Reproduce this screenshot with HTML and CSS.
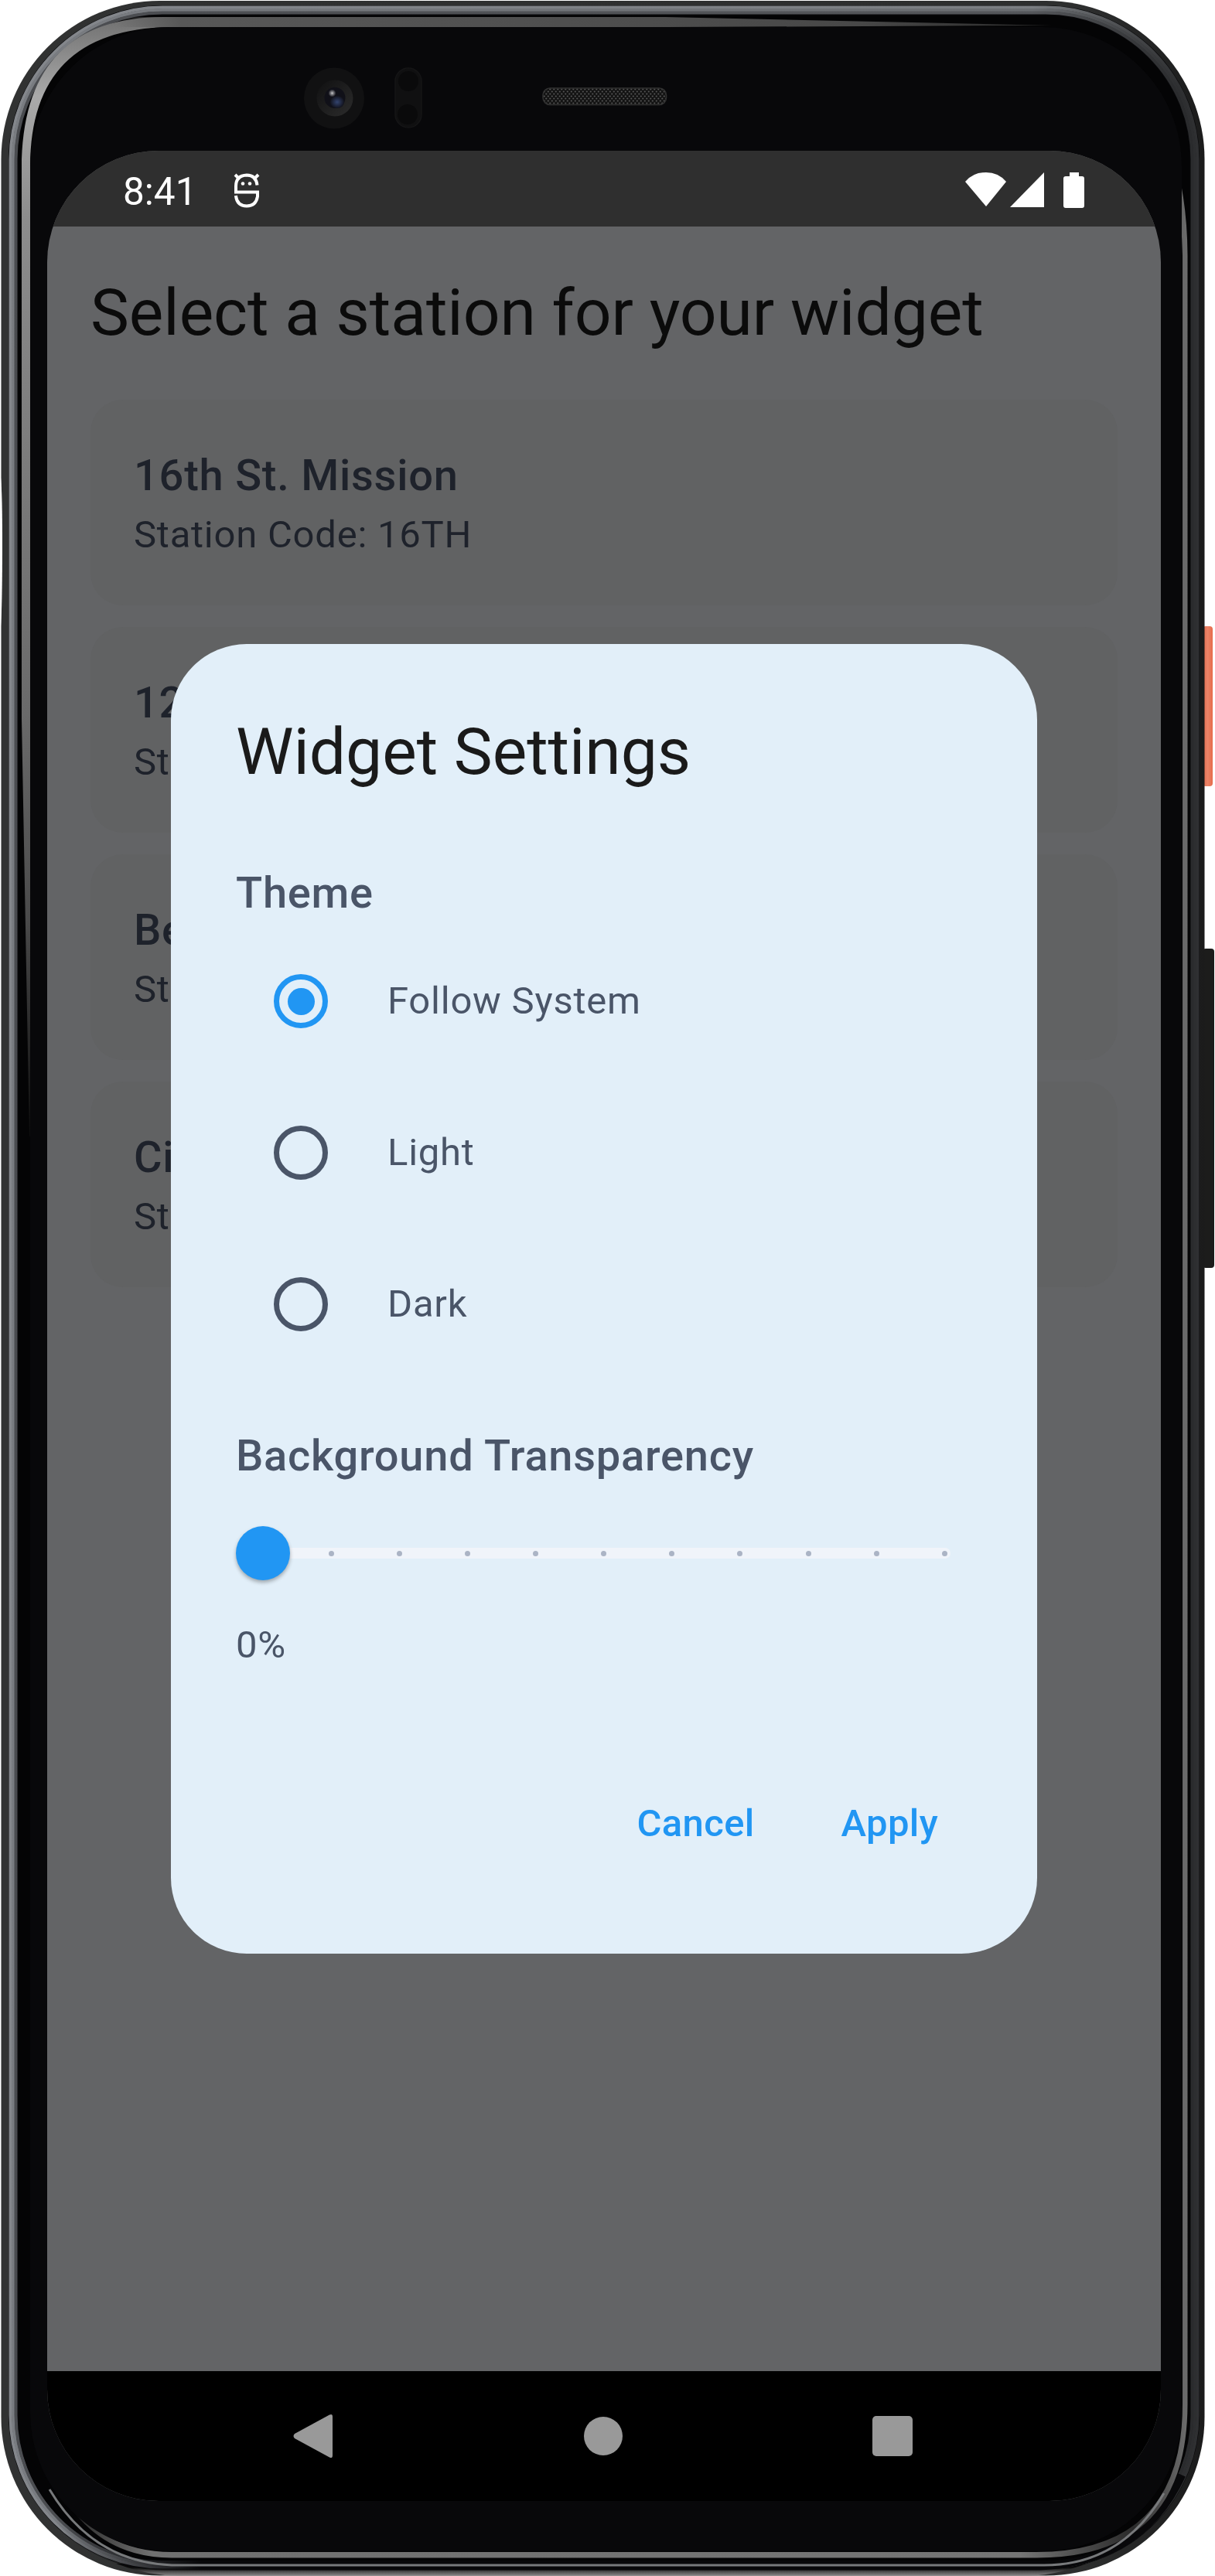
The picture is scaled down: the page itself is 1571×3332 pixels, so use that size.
FILE: index.html
```html
<!DOCTYPE html>
<html lang="en">
<head>
<meta charset="utf-8">
<title>Widget Settings</title>
<link rel="stylesheet" href="styles.css">
</head>
<body>
<div class="device">
  <svg class="frame" viewBox="0 0 1571 3332" aria-hidden="true">
    <defs>
      <linearGradient id="rimA" x1="0" x2="1571" y1="0" y2="0" gradientUnits="userSpaceOnUse">
        <stop offset="0" stop-color="#84878c"/><stop offset=".85" stop-color="#7b7e82"/><stop offset=".97" stop-color="#2f3032"/>
      </linearGradient>
      <linearGradient id="rimB" x1="0" x2="1571" y1="0" y2="0" gradientUnits="userSpaceOnUse">
        <stop offset="0" stop-color="#797c81"/><stop offset=".85" stop-color="#6b6e72"/><stop offset=".97" stop-color="#2d2e30"/>
      </linearGradient>
      <linearGradient id="rimC" x1="0" x2="1571" y1="0" y2="0" gradientUnits="userSpaceOnUse">
        <stop offset="0" stop-color="#4a4c50"/><stop offset=".85" stop-color="#55575b"/><stop offset=".97" stop-color="#2a2b2d"/>
      </linearGradient>
      <linearGradient id="edge" x1="0" x2="1" y1="0" y2="0">
        <stop offset="0" stop-color="#313232"/><stop offset=".9" stop-color="#2d2e2e"/><stop offset="1" stop-color="#1b1b1b"/>
      </linearGradient>
      <linearGradient id="bevelLeft" x1="0" x2="0" y1="22" y2="1480" gradientUnits="userSpaceOnUse">
        <stop offset="0" stop-color="#707070"/><stop offset=".07" stop-color="#a9a9a9"/><stop offset=".18" stop-color="#8c8c8c"/>
        <stop offset=".62" stop-color="#6a6a6a"/><stop offset=".8" stop-color="#4a4a4a"/><stop offset="1" stop-color="#0a0a0a"/>
      </linearGradient>
      <linearGradient id="bevelTop" x1="150" x2="1350" y1="0" y2="0" gradientUnits="userSpaceOnUse">
        <stop offset="0" stop-color="#5a5a5a" stop-opacity="0"/><stop offset=".07" stop-color="#585858"/><stop offset=".8" stop-color="#484848"/><stop offset="1" stop-color="#2a2a2a"/>
      </linearGradient>
      <linearGradient id="bottomDark" x1="70" x2="260" y1="0" y2="0" gradientUnits="userSpaceOnUse">
        <stop offset="0" stop-color="#08080a" stop-opacity="0"/><stop offset="1" stop-color="#08080a"/>
      </linearGradient>
      <linearGradient id="bottomEdge" x1="0" x2="0" y1="3321" y2="3332" gradientUnits="userSpaceOnUse">
        <stop offset="0" stop-color="#0a0a0a"/><stop offset=".6" stop-color="#5b5b5b"/><stop offset="1" stop-color="#8d8a8b"/>
      </linearGradient>
      <linearGradient id="bottomBevel" x1="80" x2="1538" y1="0" y2="0" gradientUnits="userSpaceOnUse">
        <stop offset="0" stop-color="#222"/><stop offset=".08" stop-color="#707070"/><stop offset=".85" stop-color="#757575"/><stop offset=".95" stop-color="#2a2a2a"/><stop offset="1" stop-color="#6f6f6f"/>
      </linearGradient>
      <linearGradient id="power" x1="0" x2="1" y1="0" y2="0">
        <stop offset="0" stop-color="#e06a4c"/><stop offset=".5" stop-color="#ec8468"/><stop offset="1" stop-color="#e66b4a"/>
      </linearGradient>
      <linearGradient id="lens" x1="0" x2="1" y1="0" y2="1">
        <stop offset="0" stop-color="#101011"/><stop offset="1" stop-color="#2c2c2c"/>
      </linearGradient>
      <radialGradient id="blue"><stop offset="0" stop-color="#33446f"/><stop offset="1" stop-color="#12131d"/></radialGradient>
      <radialGradient id="glint"><stop offset="0" stop-color="#c5c5c8"/><stop offset=".4" stop-color="#77777c"/><stop offset="1" stop-color="#77777c" stop-opacity="0"/></radialGradient>
      <pattern id="mesh" width="5" height="6" patternUnits="userSpaceOnUse">
        <rect width="5" height="6" fill="#131313"/><circle cx="1.3" cy="1.5" r="1.100" fill="#555"/><circle cx="3.8" cy="4.5" r="1.100" fill="#555"/>
      </pattern>
    </defs>
    <rect x="1555" y="810" width="13" height="207" rx="4" fill="url(#power)"/>
    <rect x="1555" y="1227" width="15" height="413" rx="4" fill="#1c1c1b"/>
    <rect x="1.5" y="1" width="1556" height="3330.500" rx="205" fill="url(#edge)"/>
    <path d="M0 610Q3 625 3 700Q3 800 0 820Z" fill="#fff"/>
    <path d="M150 3316Q190 3331.500 230 3331.500H1330Q1370 3331.500 1420 3310Z" fill="url(#bottomEdge)"/>
    <rect x="11" y="7" width="1540" height="3316" rx="199" fill="#08080a"/>
    <rect x="13.500" y="9.500" width="1535" height="3311" rx="196.500" fill="none" stroke="url(#rimA)" stroke-width="4"/>
    <rect x="17" y="13" width="1528" height="3304" rx="193" fill="none" stroke="url(#rimB)" stroke-width="4"/>
    <rect x="20.500" y="16.500" width="1521" height="3297" rx="189.500" fill="none" stroke="url(#rimC)" stroke-width="4"/>
    <path d="M70 3246Q120 3316 215 3316H1345Q1475 3310 1525 3200" fill="none" stroke="url(#bottomDark)" stroke-width="17"/>
    <rect x="23.500" y="20" width="1515" height="3292" rx="186" fill="#040405"/>
    <path d="M38 1470L28 930V206Q34 22 212 22H240V35H219Q39 38 39 215V1470Z" fill="url(#bevelLeft)"/>
    <path d="M150 22H860L1360 33L860 35H150Z" fill="url(#bevelTop)"/>
    <path d="M1535.500 330V3110Q1535 3308.500 1340 3308.500H222Q125 3308 78 3222Q130 3301 222 3301H1340Q1529 3300 1529 3110V330Q1526 225 1505 165Q1535 235 1535.500 330Z" fill="url(#bottomBevel)"/>
    <path d="M1505 3225Q1450 3318 1350 3318H222Q120 3314 64 3220" fill="none" stroke="#77797b" stroke-width="3"/>
    <rect x="39" y="35" width="1489" height="3265" rx="180" fill="#08080a"/>
    <ellipse cx="432" cy="127" rx="39" ry="39.500" fill="#111112"/>
    <circle cx="433" cy="127" r="23.500" fill="url(#lens)"/>
    <circle cx="433" cy="126.500" r="13.500" fill="#101018"/>
    <ellipse cx="436" cy="132" rx="9" ry="8" fill="url(#blue)"/>
    <circle cx="429.500" cy="120.500" r="5" fill="url(#glint)"/>
    <rect x="511" y="88" width="34" height="77" rx="17" fill="#101011" stroke="#151516" stroke-width="1.500"/>
    <circle cx="528" cy="105" r="13" fill="#0a0a0b"/><circle cx="527" cy="148" r="13" fill="#0a0a0b"/>
    <rect x="702" y="114" width="159.500" height="21.500" rx="9" fill="url(#mesh)" stroke="#303030" stroke-width="1.500"/>
  </svg>

  <div class="screen">
    <header class="status">
      <span class="clock">8:41</span>
      <svg class="bug" viewBox="0 0 34 47" fill="none" stroke="#fff" stroke-width="4">
        <path d="M30.500 16.500Q29 3.500 17 3.500Q3 4 3 18V25.500H31V31Q29 43.500 17 43.500Q4 43 3 30"/>
        <path d="M2 3L8 9M32 3L26 9" stroke-width="4"/>
        <circle cx="12" cy="14.500" r="2.300" fill="#fff" stroke="none"/><circle cx="21" cy="14.500" r="2.300" fill="#fff" stroke="none"/>
      </svg>
      <svg class="signals" viewBox="0 0 156 46" fill="#fff">
        <path d="M0 12Q10 0 27 0Q43 0 53 12L27 44Z"/>
        <path d="M58 45L102 0V45Z"/>
        <path d="M135 0H147V5H151Q154 5 154 8V43Q154 46 151 46H130Q127 46 127 43V8Q127 5 130 5H135Z"/>
      </svg>
    </header>

    <main class="page">
      <h1 class="headline">Select a station for your widget</h1>
      <ul class="stations">
        <li class="station"><h2 class="title">16th St. Mission</h2><p class="body">Station Code: 16TH</p></li>
        <li class="station"><h2 class="title">12</h2><p class="body">St</p></li>
        <li class="station"><h2 class="title">Be</h2><p class="body">St</p></li>
        <li class="station"><h2 class="title">Ci</h2><p class="body">St</p></li>
      </ul>
    </main>

    <nav class="navbar">
      <svg viewBox="0 0 52 58"><path d="M47 1.500Q51 -.5 51 4V54Q51 58.500 47 56.500L2 32Q-1 29 2 26Z"/></svg>
      <svg viewBox="0 0 52 58"><circle cx="26" cy="29" r="25"/></svg>
      <svg viewBox="0 0 52 58"><rect y="3" width="52" height="52" rx="5"/></svg>
    </nav>

    <div class="overlay">
      <section class="dialog">
        <h2 class="headline">Widget Settings</h2>
        <h3 class="title theme">Theme</h3>
        <div class="options">
          <div class="option"><span class="radio checked"></span><span class="body">Follow System</span></div>
          <div class="option"><span class="radio"></span><span class="body">Light</span></div>
          <div class="option"><span class="radio"></span><span class="body">Dark</span></div>
        </div>
        <h3 class="title transparency">Background Transparency</h3>
        <div class="slider">
          <div class="thumb"></div>
          <div class="track"><i></i><i></i><i></i><i></i><i></i><i></i><i></i><i></i><i></i><i></i></div>
        </div>
        <p class="body">0%</p>
        <div class="actions"><span class="button">Cancel</span><span class="button">Apply</span></div>
      </section>
    </div>
  </div>
</div>
</body>
</html>
```
FILE: styles.css
```css
* { box-sizing: border-box; margin: 0; padding: 0; }
body { background: #fff; font-family: Roboto, "Liberation Sans", sans-serif; }
.device { position: relative; width: 1571px; height: 3332px; padding: 195px 70px 97px 61px; overflow: hidden; }
.frame { position: absolute; inset: 0; width: 1571px; height: 3332px; }
.screen { position: relative; display: flex; flex-direction: column; width: 1440px; height: 3040px; border-radius: 144px; overflow: hidden; background: #636466; }

.headline { font-size: 84px; line-height: 112px; font-weight: 400; letter-spacing: -.07px; white-space: nowrap; }
.title { font-size: 56px; line-height: 84px; font-weight: 500; letter-spacing: .76px; white-space: nowrap; }
.body { font-size: 49px; line-height: 70px; font-weight: 400; letter-spacing: .76px; white-space: nowrap; }

.status { display: flex; align-items: center; height: 98px; padding: 4px 97px 0 98px; background: #2f2f2f; color: #fff; }
.clock { font-size: 49.5px; line-height: 90px; padding-top: 4px; }
.bug { width: 34px; height: 47px; margin-left: 48px; }
.signals { width: 156px; height: 46px; margin-left: auto; }

.page { flex: 1; padding: 56px; color: #0b0b0b; }
.stations { display: flex; flex-direction: column; gap: 28px; margin-top: 56px; list-style: none; color: #1e222b; }
.station { height: 266px; padding: 56px; border-radius: 42px; background: #616263; }

.navbar { display: flex; justify-content: space-between; align-items: center; height: 168px; padding: 0 321px 0 318px; background: #000; fill: #999; }
.navbar svg { width: 52px; height: 58px; }

.overlay { position: absolute; top: 638px; left: 160px; }
.dialog { width: 1120px; height: 1694px; padding: 84px; border-radius: 98px; background: #e2eff9; color: #4a5568; }
.dialog .headline { color: #1a1a1a; }
.theme { margin-top: 84px; }
.option { display: flex; align-items: center; gap: 77px; height: 196px; padding-left: 49px; }
.radio { display: grid; place-items: center; width: 70px; height: 70px; border: 7px solid #4a5568; border-radius: 50%; }
.checked { border-color: #2196f3; }
.checked::after { content: ""; width: 35px; height: 35px; border-radius: 50%; background: #2196f3; }
.transparency { margin-top: 56px; }
.slider { display: flex; align-items: center; height: 168px; padding-right: 28px; }
.thumb { width: 70px; height: 70px; border-radius: 50%; background: #2196f3; box-shadow: 0 3px 5px rgba(0, 0, 0, .3); z-index: 1; }
.track { flex: 1; display: flex; justify-content: space-between; align-items: center; height: 14px; margin-left: -20px; padding: 0 4px 0 69.500px; border-radius: 7px; background: #f0f4fa; }
.track i { width: 7px; height: 7px; border-radius: 50%; background: #abb4c5; }
.actions { display: flex; justify-content: flex-end; align-items: center; gap: 28px; height: 168px; margin: 112px 2px 0 0; color: #2196f3; }
.button { padding: 35px 42px; font-size: 49px; line-height: 70px; font-weight: 500; letter-spacing: .35px; }
```
